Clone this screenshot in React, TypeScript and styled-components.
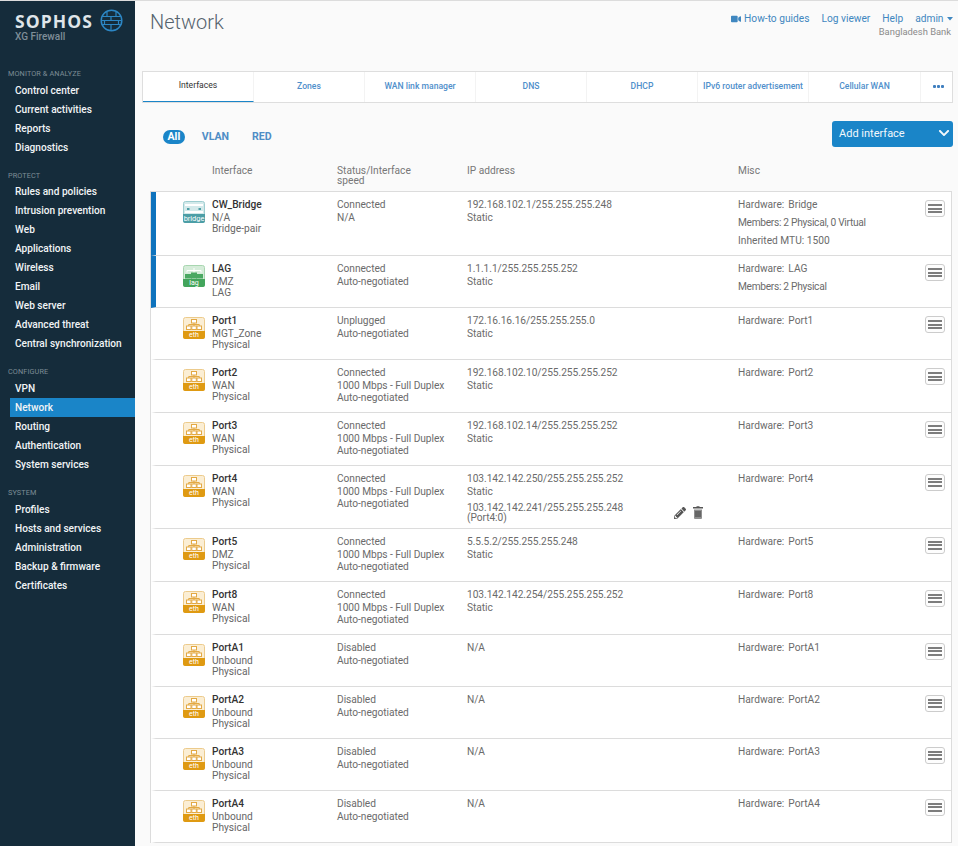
import React from "react";
import styled, { createGlobalStyle } from "styled-components";
import { FaVideo, FaChevronDown, FaPencilAlt } from "react-icons/fa";

const Global = createGlobalStyle`
  html, body { margin: 0; padding: 0; background: #fafafa; }
  body { font-family: Roboto, "Liberation Sans", sans-serif; font-size: 10.2px; color: #666; }
  * { box-sizing: border-box; }
`;

const Shell = styled.div`
  display: flex;
  width: 958px;
  height: 846px;
  overflow: hidden;
  border-top: 1px solid #dcdcdc;
`;

const Sidebar = styled.nav`
  width: 135px;
  flex: none;
  background: #152c3b;
  padding-top: 8px;
`;

const Brand = styled.div`
  display: flex;
  flex-direction: column;
  padding-left: 15px;
  height: 54px;
  margin-bottom: 6px;
`;

const BrandTop = styled.div`
  display: flex;
  align-items: center;
  gap: 7px;
`;

const BrandName = styled.span`
  font-family: "Open Sans", sans-serif;
  font-weight: 700;
  font-size: 17.5px;
  line-height: 20px;
  letter-spacing: 1.1px;
  color: #dfe5e9;
`;

const BrandSub = styled.span`
  font-size: 10px;
  line-height: 12px;
  font-weight: 500;
  color: #7f8e98;
  margin-top: -1px;
`;

const Section = styled.div`
  margin-bottom: 13.9px;
`;

const SectionTitle = styled.div`
  font-size: 7.3px;
  line-height: 10px;
  letter-spacing: 0.1px;
  color: #7d8c96;
  padding-left: 8px;
  margin-bottom: 1.8px;
`;

const NavItem = styled.div<{ $active?: boolean }>`
  height: 19px;
  line-height: 19px;
  margin-left: 10px;
  padding-left: 5px;
  font-size: 10.1px;
  font-weight: 500;
  color: #f1f4f6;
  background: ${(p) => (p.$active ? "#1a85c8" : "transparent")};
`;

const Main = styled.main`
  flex: 1;
  min-width: 0;
  display: flex;
  flex-direction: column;
`;

const TopBar = styled.header`
  display: flex;
  justify-content: space-between;
  height: 70px;
  padding: 9px 5px 0 15px;
`;

const Title = styled.h1`
  margin: 0;
  font-size: 20px;
  line-height: 24px;
  font-weight: 300;
  color: #55636e;
`;

const TopRight = styled.div`
  display: flex;
  flex-direction: column;
  align-items: flex-end;
`;

const TopLinks = styled.div`
  display: flex;
  align-items: center;
  gap: 12px;
  height: 17px;
  font-size: 10.2px;
  color: #3f87c0;
`;

const TopLink = styled.span`
  display: inline-flex;
  align-items: center;
  gap: 3.5px;
`;

const Org = styled.div`
  font-size: 9.4px;
  line-height: 11px;
  margin-top: -1px;
  color: #8a8a8a;
  padding-right: 2px;
`;

const Tabs = styled.div`
  display: flex;
  margin-left: 7px;
  width: 811px;
  height: 32px;
  background: #fff;
  border: 1px solid #dedede;
  flex: none;
`;

const Tab = styled.div<{ $active?: boolean }>`
  width: 111px;
  flex: none;
  display: flex;
  align-items: center;
  justify-content: center;
  font-size: 8.6px;
  padding-bottom: ${(p) => (p.$active ? "4px" : "2px")};
  font-weight: ${(p) => (p.$active ? 400 : 500)};
  color: ${(p) => (p.$active ? "#333" : "#4f8fcb")};
  border-right: 1px solid #f3f3f3;
  border-bottom: ${(p) => (p.$active ? "1px solid #1a85c8" : "0")};
  &:nth-child(7) { width: 112px; }
`;

const MoreTab = styled.div`
  flex: 1;
  display: flex;
  align-items: center;
  justify-content: center;
  gap: 1px;
  padding: 0 0 2px 3px;
`;

const Dot = styled.i`
  width: 3px;
  height: 3px;
  background: #3f7fbf;
  border-radius: 1px;
`;

const FilterBar = styled.div`
  display: flex;
  align-items: center;
  justify-content: space-between;
  margin-top: 18px;
  padding: 0 5px 0 28px;
  height: 26px;
  flex: none;
`;

const Filters = styled.div`
  display: flex;
  align-items: center;
  gap: 17px;
  margin-top: 6px;
`;

const Filter = styled.span<{ $active?: boolean }>`
  font-size: 10.6px;
  font-weight: 700;
  line-height: 14px;
  color: ${(p) => (p.$active ? "#fff" : "#4f8dc6")};
  background: ${(p) => (p.$active ? "#1a85c8" : "transparent")};
  border-radius: 7px;
  padding: ${(p) => (p.$active ? "0 4.5px" : "0")};
  & + & + & { margin-left: 6px; }
`;

const AddButton = styled.div`
  width: 121px;
  height: 26px;
  background: #1a85c8;
  border-radius: 3px;
  color: #f2f8fc;
  font-size: 11px;
  display: flex;
  align-items: center;
  justify-content: space-between;
  padding: 0 3px 2px 7px;
`;

const HeaderRow = styled.div`
  display: grid;
  grid-template-columns: 61px 125px 130px 271px 1fr;
  margin: 0 0 0 16px;
  height: 44px;
  padding-top: 19px;
  flex: none;
  font-size: 10.2px;
  color: #777;
`;

const HeadCell = styled.div`
  line-height: 9.5px;
  &:first-child { grid-column: 2; }
`;

const Table = styled.div`
  width: 802px;
  margin-left: 15px;
  border: 1px solid #dcdcdc;
  border-bottom: 0;
  flex: none;
`;

const Row = styled.div<{ $h: number; $accent?: boolean }>`
  display: grid;
  grid-template-columns: 56px 125px 130px 271px 187px 20px;
  height: ${(p) => p.$h}px;
  background: #fff;
  border-bottom: 1px solid #dcdcdc;
  border-left: 5px solid ${(p) => (p.$accent ? "#0f73bd" : "transparent")};
`;

const IconCell = styled.div`
  padding: 9px 0 0 27px;
`;

const NameCell = styled.div`
  padding-top: 7px;
`;

const Name = styled.div`
  font-weight: 500;
  color: #333;
  line-height: 12px;
  margin-bottom: 1px;
`;

const Sub = styled.div`
  line-height: 11.3px;
  color: #666;
`;

const TextCell = styled.div`
  padding-top: 7px;
  line-height: 12.6px;
  letter-spacing: -0.05px;
  color: #6b6b6b;
`;

const Alias = styled.div`
  display: flex;
  justify-content: space-between;
  align-items: center;
  margin-top: 5px;
  padding-right: 35px;
  line-height: 9.5px;
`;

const AliasActions = styled.div`
  display: flex;
  align-items: center;
  gap: 7px;
  color: #555;
`;

const MiscCell = styled.div`
  padding-top: 4px;
  line-height: 18px;
  color: #6b6b6b;
`;

const MiscLine = styled.div<{ $tight?: boolean }>`
  letter-spacing: ${(p) => (p.$tight ? "-0.3px" : "0")};
`;

const HwLabel = styled.span`
  margin-right: 4px;
`;

const MenuCell = styled.div`
  padding-top: 8px;
`;

const MenuButton = styled.div`
  width: 20px;
  height: 17px;
  border: 1px solid #ccc;
  border-radius: 3px;
  padding: 3px 2px;
  display: flex;
  flex-direction: column;
  justify-content: space-between;
  background: #fdfdfd;
`;

const Bar = styled.i`
  display: block;
  height: 2px;
  background: #7d7d7d;
`;

function BrandGlobe() {
  return (
    <svg width="23" height="23" viewBox="0 0 23 23" fill="none" stroke="#2c86c4" strokeWidth="1.5">
      <circle cx="11.5" cy="11.5" r="10.3" />
      <path d="M2 7.5h19M1.5 15.5h20M2 11.5h19" strokeWidth="1.2" />
      <path d="M7 2.5v5M16 2.5v5M11 7.5v4M4.5 11.5v4M18.5 11.5v4M11 15.5v6" strokeWidth="1.2" />
    </svg>
  );
}

function Caret() {
  return (
    <svg width="6" height="4" viewBox="0 0 6 4" fill="#3f87c0">
      <path d="M0 0h6L3 3.6z" />
    </svg>
  );
}

function Trash() {
  return (
    <svg width="10" height="13" viewBox="0 0 10 13">
      <path d="M3.5 1V.3h3V1H10v1.6H0V1z" fill="#555" />
      <path d="M1 3.4h8V12a1 1 0 0 1-1 1H2a1 1 0 0 1-1-1z" fill="#8f8f8f" />
      <path d="M3 5v6M5 5v6M7 5v6" stroke="#3f3f3f" strokeWidth="1" />
    </svg>
  );
}

const tints = {
  eth: { bg: "#fbeed4", edge: "#eccb8c", band: "#df9a12", line: "#e3a944", top: 14 },
  lag: { bg: "#d5ecd9", edge: "#a8d6b0", band: "#43a55c", line: "#4aa862", top: 14 },
  bridge: { bg: "#d3e9ea", edge: "#9dcdd0", band: "#4c9ea6", line: "#4c9ea6", top: 13 },
};

function PortIcon({ kind }: { kind: keyof typeof tints }) {
  const c = tints[kind];
  return (
    <svg width="22" height="22" viewBox="0 0 22 22">
      <rect x="0.5" y="0.5" width="21" height="21" rx="2" fill={c.bg} stroke={c.edge} />
      <path d={`M0 ${c.top}h22v${20 - c.top}a2 2 0 0 1-2 2H2a2 2 0 0 1-2-2z`} fill={c.band} />
      <text x="11" y="20.3" textAnchor="middle" fontSize={kind === "bridge" ? 7.4 : 7} fill="#fff" fontFamily="Roboto, sans-serif">
        {kind}
      </text>
      {kind === "eth" && (
        <g fill="#fff" stroke={c.line} strokeWidth="1">
          <rect x="8.5" y="2.5" width="5" height="3.5" />
          <rect x="3.5" y="9" width="4.5" height="3.5" />
          <rect x="8.8" y="9" width="4.5" height="3.5" />
          <rect x="14" y="9" width="4.5" height="3.5" />
          <path d="M11 6v3M5.7 9V7.5h10.6V9" fill="none" />
        </g>
      )}
      {kind === "lag" && (
        <g fill="#4aa862" stroke="#4aa862" strokeWidth="1">
          <path d="M4 7.5V5.5h14v2M11 3v5" fill="none" stroke="#fff" />
          <rect x="2.5" y="9.5" width="6" height="3.5" />
          <rect x="13.5" y="9.5" width="6" height="3.5" />
          <rect x="8.5" y="8" width="5" height="5" />
        </g>
      )}
      {kind === "bridge" && (
        <g>
          <rect x="2" y="3" width="18" height="2" fill="#fff" />
          <rect x="2" y="10" width="18" height="2" fill="#fff" />
          <rect x="4" y="7" width="2.5" height="2" fill="#4c9ea6" />
          <rect x="15.5" y="7" width="2.5" height="2" fill="#4c9ea6" />
        </g>
      )}
    </svg>
  );
}

type Iface = {
  name: string;
  zone: string;
  type: string;
  kind: keyof typeof tints;
  status: string[];
  ip: string[];
  hardware: string;
  extra?: string[];
  h: number;
  accent?: boolean;
  alias?: string[];
};

const FULL = ["Connected", "1000 Mbps - Full Duplex", "Auto-negotiated"];

const rows: Iface[] = [
  { name: "CW_Bridge", zone: "N/A", type: "Bridge-pair", kind: "bridge", status: ["Connected", "N/A"], ip: ["192.168.102.1/255.255.255.248", "Static"], hardware: "Bridge", extra: ["Members: 2 Physical, 0 Virtual", "Inherited MTU: 1500"], h: 64, accent: true },
  { name: "LAG", zone: "DMZ", type: "LAG", kind: "lag", status: ["Connected", "Auto-negotiated"], ip: ["1.1.1.1/255.255.255.252", "Static"], hardware: "LAG", extra: ["Members: 2 Physical"], h: 52, accent: true },
  { name: "Port1", zone: "MGT_Zone", type: "Physical", kind: "eth", status: ["Unplugged", "Auto-negotiated"], ip: ["172.16.16.16/255.255.255.0", "Static"], hardware: "Port1", h: 52.2 },
  { name: "Port2", zone: "WAN", type: "Physical", kind: "eth", status: FULL, ip: ["192.168.102.10/255.255.255.252", "Static"], hardware: "Port2", h: 53 },
  { name: "Port3", zone: "WAN", type: "Physical", kind: "eth", status: FULL, ip: ["192.168.102.14/255.255.255.252", "Static"], hardware: "Port3", h: 52.8 },
  { name: "Port4", zone: "WAN", type: "Physical", kind: "eth", status: FULL, ip: ["103.142.142.250/255.255.255.252", "Static"], alias: ["103.142.142.241/255.255.255.248", "(Port4:0)"], hardware: "Port4", h: 63 },
  { name: "Port5", zone: "DMZ", type: "Physical", kind: "eth", status: FULL, ip: ["5.5.5.2/255.255.255.248", "Static"], hardware: "Port5", h: 53 },
  { name: "Port8", zone: "WAN", type: "Physical", kind: "eth", status: FULL, ip: ["103.142.142.254/255.255.255.252", "Static"], hardware: "Port8", h: 53 },
  { name: "PortA1", zone: "Unbound", type: "Physical", kind: "eth", status: ["Disabled", "Auto-negotiated"], ip: ["N/A"], hardware: "PortA1", h: 52 },
  { name: "PortA2", zone: "Unbound", type: "Physical", kind: "eth", status: ["Disabled", "Auto-negotiated"], ip: ["N/A"], hardware: "PortA2", h: 52 },
  { name: "PortA3", zone: "Unbound", type: "Physical", kind: "eth", status: ["Disabled", "Auto-negotiated"], ip: ["N/A"], hardware: "PortA3", h: 52 },
  { name: "PortA4", zone: "Unbound", type: "Physical", kind: "eth", status: ["Disabled", "Auto-negotiated"], ip: ["N/A"], hardware: "PortA4", h: 52 },
];

const nav = [
  { title: "MONITOR & ANALYZE", items: ["Control center", "Current activities", "Reports", "Diagnostics"] },
  { title: "PROTECT", items: ["Rules and policies", "Intrusion prevention", "Web", "Applications", "Wireless", "Email", "Web server", "Advanced threat", "Central synchronization"] },
  { title: "CONFIGURE", items: ["VPN", "Network", "Routing", "Authentication", "System services"] },
  { title: "SYSTEM", items: ["Profiles", "Hosts and services", "Administration", "Backup & firmware", "Certificates"] },
];

const tabs = ["Interfaces", "Zones", "WAN link manager", "DNS", "DHCP", "IPv6 router advertisement", "Cellular WAN"];

export default function App() {
  return (
    <>
      <Global />
      <Shell>
        <Sidebar>
          <Brand>
            <BrandTop>
              <BrandName>SOPHOS</BrandName>
              <BrandGlobe />
            </BrandTop>
            <BrandSub>XG Firewall</BrandSub>
          </Brand>
          {nav.map((s) => (
            <Section key={s.title}>
              <SectionTitle>{s.title}</SectionTitle>
              {s.items.map((i) => (
                <NavItem key={i} $active={i === "Network"}>{i}</NavItem>
              ))}
            </Section>
          ))}
        </Sidebar>
        <Main>
          <TopBar>
            <Title>Network</Title>
            <TopRight>
              <TopLinks>
                <TopLink><FaVideo size={10} />How-to guides</TopLink>
                <TopLink>Log viewer</TopLink>
                <TopLink>Help</TopLink>
                <TopLink>admin<Caret /></TopLink>
              </TopLinks>
              <Org>Bangladesh Bank</Org>
            </TopRight>
          </TopBar>
          <Tabs>
            {tabs.map((t, i) => (
              <Tab key={t} $active={i === 0}>{t}</Tab>
            ))}
            <MoreTab><Dot /><Dot /><Dot /></MoreTab>
          </Tabs>
          <FilterBar>
            <Filters>
              <Filter $active>All</Filter>
              <Filter>VLAN</Filter>
              <Filter>RED</Filter>
            </Filters>
            <AddButton>Add interface<FaChevronDown size={12} /></AddButton>
          </FilterBar>
          <HeaderRow>
            <HeadCell>Interface</HeadCell>
            <HeadCell>Status/Interface<br />speed</HeadCell>
            <HeadCell>IP address</HeadCell>
            <HeadCell>Misc</HeadCell>
          </HeaderRow>
          <Table>
            {rows.map((r) => (
              <Row key={r.name} $h={r.h} $accent={r.accent}>
                <IconCell><PortIcon kind={r.kind} /></IconCell>
                <NameCell>
                  <Name>{r.name}</Name>
                  <Sub>{r.zone}</Sub>
                  <Sub>{r.type}</Sub>
                </NameCell>
                <TextCell>
                  {r.status.map((s) => <div key={s}>{s}</div>)}
                </TextCell>
                <TextCell>
                  {r.ip.map((s) => <div key={s}>{s}</div>)}
                  {r.alias && (
                    <Alias>
                      <div>{r.alias[0]}<br />{r.alias[1]}</div>
                      <AliasActions><FaPencilAlt size={12} /><Trash /></AliasActions>
                    </Alias>
                  )}
                </TextCell>
                <MiscCell>
                  <MiscLine><HwLabel>Hardware:</HwLabel>{r.hardware}</MiscLine>
                  {r.extra?.map((m) => <MiscLine key={m} $tight={m.startsWith("Members")}>{m}</MiscLine>)}
                </MiscCell>
                <MenuCell>
                  <MenuButton><Bar /><Bar /><Bar /></MenuButton>
                </MenuCell>
              </Row>
            ))}
          </Table>
        </Main>
      </Shell>
    </>
  );
}
